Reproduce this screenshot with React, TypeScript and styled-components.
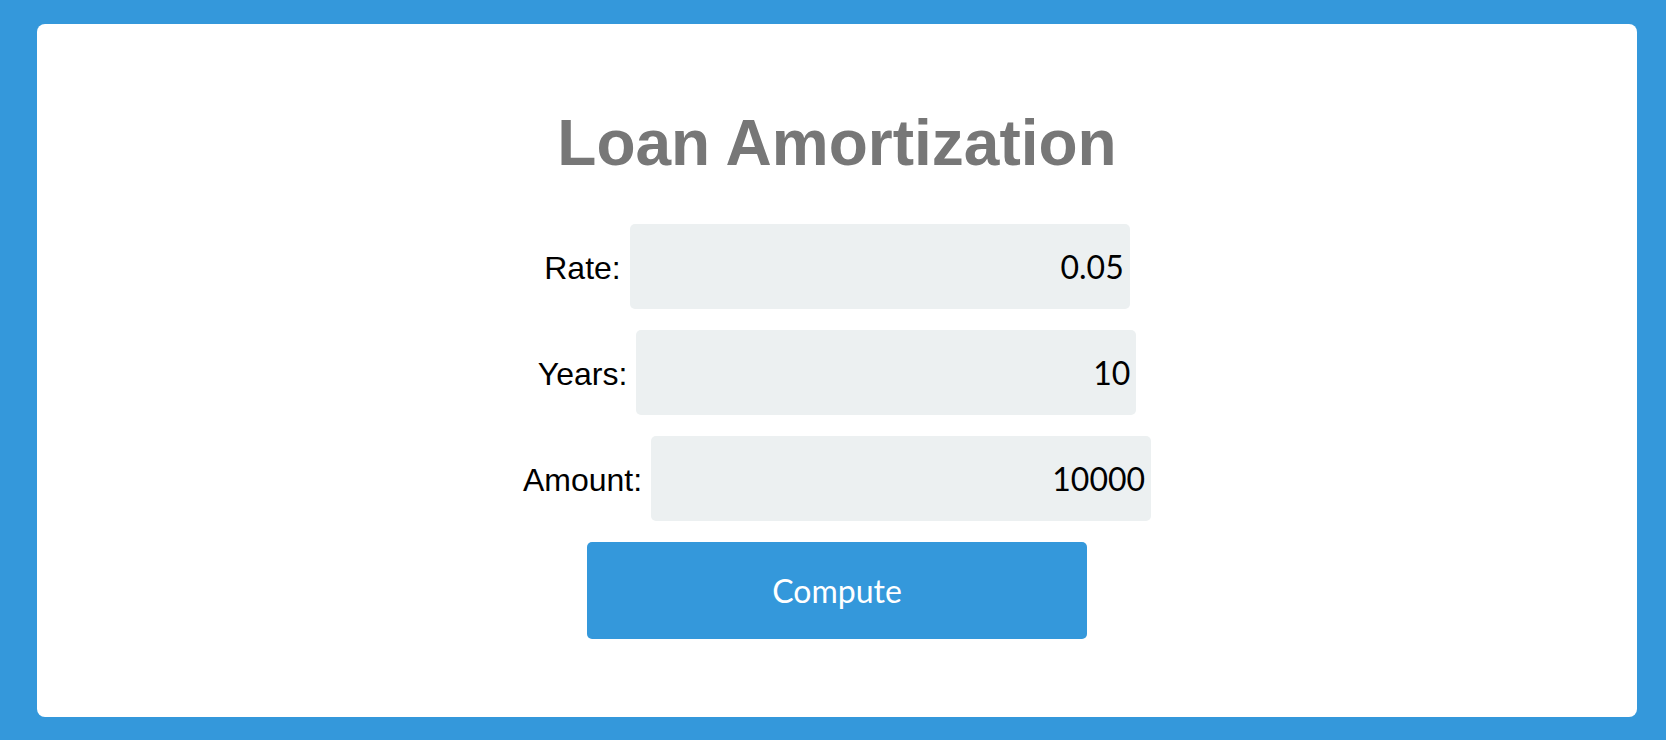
import React, { useState } from "react";
import styled, { createGlobalStyle } from "styled-components";

const GlobalStyle = createGlobalStyle`
  html, body {
    margin: 0;
    padding: 0;
    height: 100%;
  }
  body {
    background: #3498db;
    font-family: "Liberation Sans", Arial, sans-serif;
  }
  #root {
    height: 100%;
  }
`;

const Page = styled.div`
  box-sizing: border-box;
  height: 100vh;
  padding: 24px 29px 23px 37px;
  display: flex;
`;

const Card = styled.main`
  flex: 1;
  background: #ffffff;
  border-radius: 8px;
  padding-top: 82px;
  display: flex;
  flex-direction: column;
  align-items: center;
`;

const Title = styled.h1`
  margin: 0 0 44px;
  font-family: "Liberation Sans", Arial, sans-serif;
  font-size: 64px;
  line-height: 74px;
  font-weight: 700;
  color: #777777;
`;

const Form = styled.form`
  display: flex;
  flex-direction: column;
  align-items: center;
  gap: 21px;
`;

const Row = styled.div`
  display: flex;
  align-items: center;
  justify-content: center;
  gap: 9px;
`;

const Label = styled.label`
  font-size: 32px;
  line-height: 37px;
  color: #000000;
  padding-top: 3px;
`;

const Input = styled.input`
  box-sizing: border-box;
  width: 500px;
  height: 85px;
  border: none;
  border-radius: 5px;
  background: #ecf0f1;
  padding: 0 6px;
  text-align: right;
  font-family: Lato, "Liberation Sans", sans-serif;
  font-size: 32px;
  color: #000000;
  outline: none;
`;

const Button = styled.button`
  box-sizing: border-box;
  width: 500px;
  height: 97px;
  border: none;
  border-radius: 5px;
  background: #3498db;
  color: #ffffff;
  font-family: Lato, "Liberation Sans", sans-serif;
  font-size: 32px;
  cursor: pointer;
`;

const fields = [
  { id: "rate", label: "Rate:", initial: "0.05" },
  { id: "years", label: "Years:", initial: "10" },
  { id: "amount", label: "Amount:", initial: "10000" },
];

const App = () => {
  const [values, setValues] = useState<Record<string, string>>(
    Object.fromEntries(fields.map((f) => [f.id, f.initial]))
  );

  return (
    <>
      <GlobalStyle />
      <Page>
        <Card>
          <Title>Loan Amortization</Title>
          <Form onSubmit={(e) => e.preventDefault()}>
            {fields.map((f) => (
              <Row key={f.id}>
                <Label htmlFor={f.id}>{f.label}</Label>
                <Input
                  id={f.id}
                  value={values[f.id]}
                  onChange={(e) =>
                    setValues({ ...values, [f.id]: e.target.value })
                  }
                />
              </Row>
            ))}
            <Button type="submit">Compute</Button>
          </Form>
        </Card>
      </Page>
    </>
  );
};

export default App;
